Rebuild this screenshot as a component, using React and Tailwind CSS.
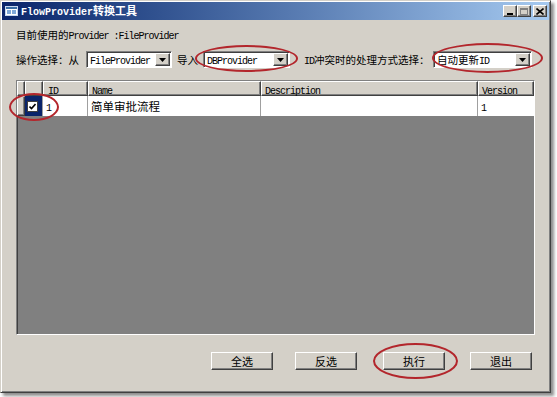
import React from 'react';

const CN = "font-['SimSun','Noto_Sans_CJK_SC',sans-serif]";
const MONO = "font-['Liberation_Mono','Noto_Sans_CJK_SC',monospace] text-[10px] tracking-[-1px]";

const raised =
  'border border-t-white border-l-white border-r-[#404040] border-b-[#404040] shadow-[inset_-1px_-1px_0_#808080]';
const sunken =
  'border border-t-[#808080] border-l-[#808080] border-r-white border-b-white shadow-[inset_1px_1px_0_#404040]';

function Combo({ width, children }) {
  return (
    <div className={`flex items-center h-[17px] bg-white ${sunken} ${width}`}>
      <div className="flex-1 pl-[3px] text-black leading-[13px] whitespace-nowrap">{children}</div>
      <div className={`w-[15px] h-[13px] mr-[1px] bg-[#d4d0c8] flex items-center justify-center ${raised}`}>
        <svg width="7" height="4" viewBox="0 0 7 4">
          <path d="M0 0h7L3.5 4z" fill="#000" />
        </svg>
      </div>
    </div>
  );
}

function TitleBtn({ children }) {
  return (
    <div className={`w-[14px] h-[12px] bg-[#d4d0c8] flex items-center justify-center ${raised}`}>
      {children}
    </div>
  );
}

function Btn({ label, className }) {
  return (
    <div
      className={`w-[62px] h-[18px] bg-[#d4d0c8] flex items-center justify-center text-[11px] text-black ${CN} ${raised} ${className}`}
    >
      {label}
    </div>
  );
}

function Ring({ className }) {
  return <div className={`absolute rounded-[50%] border-2 border-[#b3262c] pointer-events-none ${className}`} />;
}

export default function App() {
  return (
    <div className="relative w-[557px] h-[397px] bg-white overflow-hidden">
      <div className="w-[551px] h-[393px] bg-[#d4d0c8] border border-t-[#d4d0c8] border-l-[#d4d0c8] border-r-[#404040] border-b-[#404040] shadow-[inset_1px_1px_0_white,inset_-1px_-1px_0_#808080,3px_3px_3px_rgba(0,0,0,0.45)] p-[1px] flex flex-col">
        {/* title bar */}
        <div className="h-[18px] bg-gradient-to-r from-[#0a246a] to-[#a6caf0] flex items-center pl-[3px] pr-[2px]">
          <svg width="13" height="10" viewBox="0 0 13 10" className="mr-[3px]">
            <rect x="0.5" y="0.5" width="12" height="9" fill="#fff" stroke="#c8d8f0" />
            <rect x="1" y="1" width="11" height="2" fill="#3a6ea5" />
            <rect x="2" y="4" width="4" height="4" fill="#7fa8d8" />
            <rect x="7" y="4" width="4" height="4" fill="#7fa8d8" />
          </svg>
          <span className="text-white whitespace-nowrap leading-[14px]">
            <span className="font-bold font-['Liberation_Mono',monospace] text-[10px]">FlowProvider</span>
            <span className={`font-bold text-[11px] ${CN}`}>转换工具</span>
          </span>
          <div className="flex-1" />
          <div className="flex items-center">
            <TitleBtn>
              <div className="w-[6px] h-[2px] bg-black mt-[5px]" />
            </TitleBtn>
            <TitleBtn>
              <div className="w-[8px] h-[7px] border border-[#808080] border-t-2" />
            </TitleBtn>
            <div className="ml-[2px]">
              <TitleBtn>
                <svg width="8" height="7" viewBox="0 0 8 7">
                  <path d="M0.5 0.5L7.5 6.5M7.5 0.5L0.5 6.5" stroke="#000" strokeWidth="1.6" />
                </svg>
              </TitleBtn>
            </div>
          </div>
        </div>

        {/* client */}
        <div className="flex-1 flex flex-col pl-[14px] text-black">
          <div className="mt-[7px] h-[13px] leading-[13px] whitespace-nowrap">
            <span className={`text-[10.5px] ${CN}`}>目前使用的</span>
            <span className={MONO}>Provider :FileProvider</span>
          </div>

          <div className="mt-[11px] h-[17px] flex items-center whitespace-nowrap">
            <span className={`w-[70px] text-[10.5px] leading-[13px] ${CN}`}>操作选择：从</span>
            <Combo width="w-[86px]">
              <span className={MONO}>FileProvider</span>
            </Combo>
            <span className={`w-[31px] pl-[5px] text-[10.5px] leading-[13px] ${CN}`}>导入</span>
            <Combo width="w-[87px]">
              <span className={MONO}>DBProvider</span>
            </Combo>
            <span className="w-[143px] pl-[14px] leading-[13px]">
              <span className={MONO}>ID</span>
              <span className={`text-[10.5px] ${CN}`}>冲突时的处理方式选择：</span>
            </span>
            <Combo width="w-[99px]">
              <span className={`text-[10.5px] ${CN}`}>自动更新</span>
              <span className={MONO}>ID</span>
            </Combo>
          </div>

          {/* grid */}
          <div className={`mt-[12px] w-[519px] h-[255px] bg-[#808080] flex flex-col ${sunken}`}>
            <div className="h-[15px] flex bg-[#d4d0c8] leading-[13px]">
              <div className={`w-[8px] ${raised}`} />
              <div className={`w-[18px] ${raised}`} />
              <div className={`w-[45px] pl-[4px] ${raised}`}>
                <span className={MONO}>ID</span>
              </div>
              <div className={`w-[173px] pl-[3px] ${raised}`}>
                <span className={MONO}>Name</span>
              </div>
              <div className={`w-[217px] pl-[3px] ${raised}`}>
                <span className={MONO}>Description</span>
              </div>
              <div className={`flex-1 pl-[3px] ${raised}`}>
                <span className={MONO}>Version</span>
              </div>
            </div>
            <div className="h-[20px] flex leading-[19px]">
              <div className={`w-[8px] bg-[#d4d0c8] ${raised}`} />
              <div className="w-[18px] bg-[#0a246a] flex items-center pl-[2px] border-r border-[#a0a0a0]">
                <div className="w-[11px] h-[11px] bg-white border border-[#404040] flex items-center justify-center">
                  <svg width="7" height="7" viewBox="0 0 7 7">
                    <path d="M0.5 3.5L2.5 5.5L6.5 1" stroke="#000" strokeWidth="1.6" fill="none" />
                  </svg>
                </div>
              </div>
              <div className="w-[45px] bg-white pl-[3px] border-r border-[#a0a0a0]">
                <span className={MONO}>1</span>
              </div>
              <div className="w-[173px] bg-white pl-[3px] border-r border-[#a0a0a0]">
                <span className={`text-[11.5px] ${CN}`}>简单审批流程</span>
              </div>
              <div className="w-[217px] bg-white border-r border-[#a0a0a0]" />
              <div className="flex-1 bg-white pl-[3px]">
                <span className={MONO}>1</span>
              </div>
            </div>
          </div>

          {/* buttons */}
          <div className="mt-[17px] flex">
            <Btn label="全选" className="ml-[195px]" />
            <Btn label="反选" className="ml-[22px]" />
            <Btn label="执行" className="ml-[26px]" />
            <Btn label="退出" className="ml-[25px]" />
          </div>
        </div>
      </div>

      <Ring className="left-[195px] top-[45px] w-[103px] h-[27px]" />
      <Ring className="left-[432px] top-[43px] w-[111px] h-[30px]" />
      <Ring className="left-[9px] top-[93px] w-[50px] h-[28px]" />
      <Ring className="left-[373px] top-[343px] w-[85px] h-[36px]" />
    </div>
  );
}
